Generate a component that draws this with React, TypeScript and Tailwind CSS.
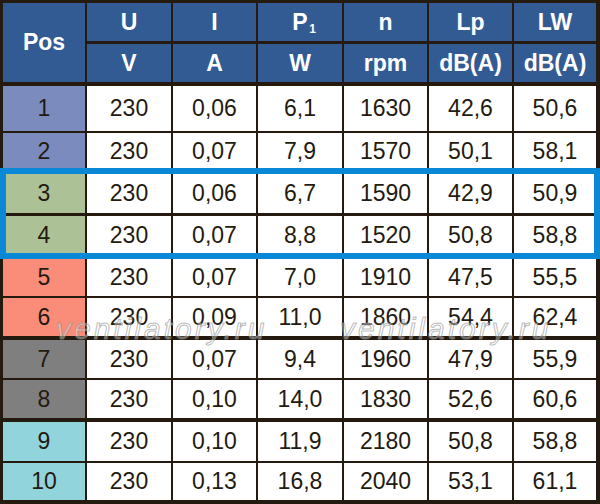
import React from "react";

type Row = {
  pos: string;
  values: string[];
  swatch: string;
  spacing: string;
};

const rows: Row[] = [
  { pos: "1", values: ["230", "0,06", "6,1", "1630", "42,6", "50,6"], swatch: "bg-[#7b8bbd]", spacing: "mt-[4px] h-[45px]" },
  { pos: "2", values: ["230", "0,07", "7,9", "1570", "50,1", "58,1"], swatch: "bg-[#7b8bbd]", spacing: "mt-[2px] h-[37px]" },
  { pos: "3", values: ["230", "0,06", "6,7", "1590", "42,9", "50,9"], swatch: "bg-[#adc197]", spacing: "mt-[4px] h-[39px]" },
  { pos: "4", values: ["230", "0,07", "8,8", "1520", "50,8", "58,8"], swatch: "bg-[#adc197]", spacing: "mt-[3px] h-[39px]" },
  { pos: "5", values: ["230", "0,07", "7,0", "1910", "47,5", "55,5"], swatch: "bg-[#fa8d79]", spacing: "mt-[4px] h-[37px]" },
  { pos: "6", values: ["230", "0,09", "11,0", "1860", "54,4", "62,4"], swatch: "bg-[#fa8d79]", spacing: "mt-[2px] h-[38px]" },
  { pos: "7", values: ["230", "0,07", "9,4", "1960", "47,9", "55,9"], swatch: "bg-[#7f7f7f]", spacing: "mt-[4px] h-[38px]" },
  { pos: "8", values: ["230", "0,10", "14,0", "1830", "52,6", "60,6"], swatch: "bg-[#7f7f7f]", spacing: "mt-[2px] h-[38px]" },
  { pos: "9", values: ["230", "0,10", "11,9", "2180", "50,8", "58,8"], swatch: "bg-[#91d4dc]", spacing: "mt-[4px] h-[39px]" },
  { pos: "10", values: ["230", "0,13", "16,8", "2040", "53,1", "61,1"], swatch: "bg-[#91d4dc]", spacing: "mt-[2px] h-[37px]" },
];

const cols = "grid grid-cols-[82px_84px_83px_84px_83px_83px_82px] gap-x-[2px]";

function HeadCell({ children, className = "" }: { children: React.ReactNode; className?: string }) {
  return (
    <div className={`flex items-center justify-center bg-[#335b93] text-white font-bold text-[23px] ${className}`}>
      {children}
    </div>
  );
}

export default function App() {
  return (
    <div className="relative w-[600px] h-[504px] overflow-hidden bg-[#241a0f] pl-[3px] pr-[4px] pt-[3px] font-['Liberation_Sans',Arial,sans-serif] leading-none">
      {/* header */}
      <div className={`${cols} grid-rows-[38px_38px] gap-y-[3px]`}>
        <HeadCell className="row-span-2">Pos</HeadCell>
        <HeadCell>U</HeadCell>
        <HeadCell>I</HeadCell>
        <HeadCell>
          <span className="relative">
            P<span className="absolute left-[17px] top-[12px] text-[12px]">1</span>
          </span>
        </HeadCell>
        <HeadCell>n</HeadCell>
        <HeadCell>Lp</HeadCell>
        <HeadCell>LW</HeadCell>
        <HeadCell>V</HeadCell>
        <HeadCell>A</HeadCell>
        <HeadCell>W</HeadCell>
        <HeadCell>rpm</HeadCell>
        <HeadCell>dB(A)</HeadCell>
        <HeadCell>dB(A)</HeadCell>
      </div>

      {/* body */}
      {rows.map((r) => (
        <div key={r.pos} className={`${cols} ${r.spacing} text-[23px] text-[#231a10]`}>
          <div className={`flex items-center justify-center ${r.swatch}`}>{r.pos}</div>
          {r.values.map((v, i) => (
            <div key={i} className="flex items-center justify-center bg-white">
              {v}
            </div>
          ))}
        </div>
      ))}

      {/* highlight frame around rows 3-4 */}
      <div className="absolute left-0 top-[168px] w-[600px] h-[91px] border-[6px] border-[#0a88d6]" />

      {/* watermark */}
      <div className="pointer-events-none absolute top-[314px] left-[56px] italic text-[30px] tracking-[3px] text-[rgba(255,255,255,0.35)] [-webkit-text-stroke:1px_rgba(140,140,140,0.6)]">
        ventilatory.ru
      </div>
      <div className="pointer-events-none absolute top-[314px] left-[340px] italic text-[30px] tracking-[3px] text-[rgba(255,255,255,0.35)] [-webkit-text-stroke:1px_rgba(140,140,140,0.6)]">
        ventilatory.ru
      </div>
    </div>
  );
}
